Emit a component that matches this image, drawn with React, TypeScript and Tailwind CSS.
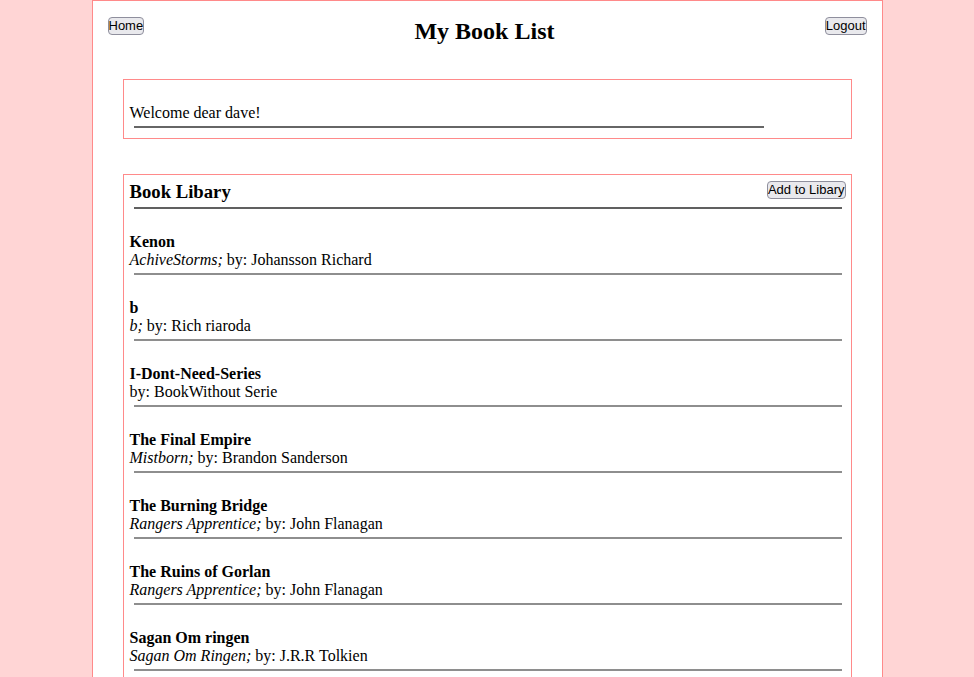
import React from "react";

interface Book {
  title: string;
  series?: string;
  author: string;
}

const books: Book[] = [
  { title: "Kenon", series: "AchiveStorms", author: "Johansson Richard" },
  { title: "b", series: "b", author: "Rich riaroda" },
  { title: "I-Dont-Need-Series", author: "BookWithout Serie" },
  { title: "The Final Empire", series: "Mistborn", author: "Brandon Sanderson" },
  { title: "The Burning Bridge", series: "Rangers Apprentice", author: "John Flanagan" },
  { title: "The Ruins of Gorlan", series: "Rangers Apprentice", author: "John Flanagan" },
  { title: "Sagan Om ringen", series: "Sagan Om Ringen", author: "J.R.R Tolkien" },
];

function Btn({ children }: { children: React.ReactNode }) {
  return (
    <button className="bg-[#e9e9ed] border border-[#8f8f9d] rounded-[4px] px-0 text-[13px] leading-[16px] text-black font-['Liberation_Sans',Arial,sans-serif]">
      {children}
    </button>
  );
}

export default function App() {
  return (
    <div className="h-screen overflow-hidden bg-[#ffd5d5] font-['Liberation_Serif','Times_New_Roman',serif] text-black">
      <div className="w-[791px] mx-auto min-h-full bg-white border border-[#ff8a8a]">
        {/* header */}
        <div className="flex justify-between items-start px-[15px] pt-[16px]">
          <Btn>Home</Btn>
          <h1 className="text-[24px] leading-[28px] font-bold">My Book List</h1>
          <Btn>Logout</Btn>
        </div>

        {/* welcome */}
        <div className="mx-[30px] mt-[34px] border border-[#ff8a8a] px-[6px] pt-[24px] pb-[10px]">
          <p className="text-[16px] leading-[18px]">Welcome dear dave!</p>
          <div className="ml-[4px] mt-[4px] w-[630px] h-[2px] bg-[#666666]" />
        </div>

        {/* library */}
        <div className="mx-[30px] mt-[35px] border border-[#ff8a8a] pl-[6px] pr-[5px] pt-[6px] pb-[20px]">
          <div className="flex justify-between items-start">
            <h3 className="text-[18.7px] leading-[22px] font-bold">Book Libary</h3>
            <Btn>Add to Libary</Btn>
          </div>
          <div className="ml-[4px] mt-[4px] w-[708px] h-[2px] bg-[#606060]" />

          <ul>
            {books.map((book, i) => (
              <li key={i} className="pt-[24px]">
                <p className="text-[16px] leading-[18px] font-bold">{book.title}</p>
                <p className="text-[16px] leading-[18px]">
                  {book.series && <i>{book.series};</i>}
                  {book.series ? " " : ""}by: {book.author}
                </p>
                <div className="ml-[4px] mt-[4px] w-[708px] h-[2px] bg-[#8e8e8e]" />
              </li>
            ))}
          </ul>
        </div>
      </div>
    </div>
  );
}
